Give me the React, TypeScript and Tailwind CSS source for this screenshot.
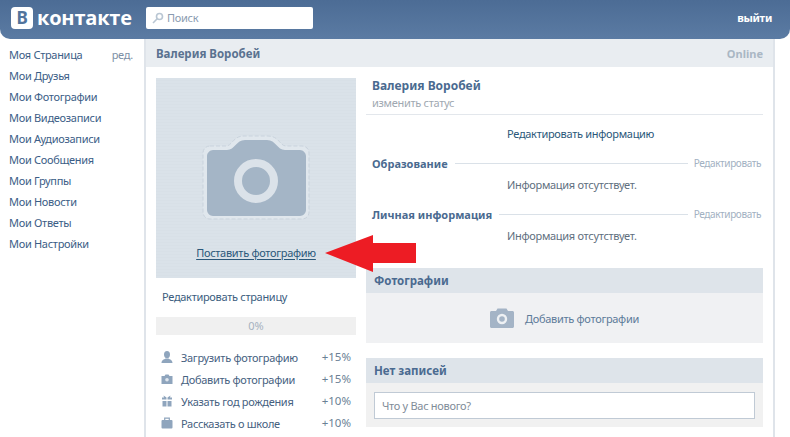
import React from 'react';

const font = { fontFamily: '"Noto Sans", Tahoma, sans-serif' };

const MENU = [
  'Моя Страница',
  'Мои Друзья',
  'Мои Фотографии',
  'Мои Видеозаписи',
  'Мои Аудиозаписи',
  'Мои Сообщения',
  'Мои Группы',
  'Мои Новости',
  'Мои Ответы',
  'Мои Настройки',
];

function UserIcon() {
  return (
    <svg width="12" height="12" viewBox="0 0 12 12" fill="#8fa5bd">
      <ellipse cx="6" cy="3.6" rx="3" ry="3.6" />
      <path d="M0.5 12 C0.5 9 3 8.6 4.5 7.5 L7.5 7.5 C9 8.6 11.5 9 11.5 12 Z" />
    </svg>
  );
}

function PhotoIcon() {
  return (
    <svg width="12" height="12" viewBox="0 0 12 12">
      <path fill="#8fa5bd" d="M0.5 3 H3.5 L4.5 1.5 H7.5 L8.5 3 H11.5 V11 H0.5 Z" />
      <circle cx="6" cy="6.8" r="1.8" fill="#dfe6ee" />
    </svg>
  );
}

function GiftIcon() {
  return (
    <svg width="12" height="12" viewBox="0 0 12 12" fill="#8fa5bd">
      <path d="M2.5 0.5 L5.5 2.5 V4.5 H1 V2.5 H3 Z M9.5 0.5 L6.5 2.5 V4.5 H11 V2.5 H9 Z" />
      <rect x="1.5" y="6" width="4" height="5.5" />
      <rect x="6.5" y="6" width="4" height="5.5" />
    </svg>
  );
}

function BagIcon() {
  return (
    <svg width="12" height="12" viewBox="0 0 12 12">
      <rect x="0.5" y="3" width="11" height="8.5" rx="1" fill="#8fa5bd" />
      <path d="M3.7 3 V1.2 H8.3 V3" fill="none" stroke="#8fa5bd" strokeWidth="1.2" />
    </svg>
  );
}

const TASKS = [
  { icon: <UserIcon />, label: 'Загрузить фотографию', pct: '+15%' },
  { icon: <PhotoIcon />, label: 'Добавить фотографии', pct: '+15%' },
  { icon: <GiftIcon />, label: 'Указать год рождения', pct: '+10%' },
  { icon: <BagIcon />, label: 'Рассказать о школе', pct: '+10%' },
];

function BigCamera() {
  return (
    <svg width="108" height="88" viewBox="0 0 108 88">
      <path
        d="M8 14 H24 C30 14 31 4 42 4 H66 C77 4 78 14 84 14 H100 C104 14 107 17 107 21 V80 C107 84 104 87 100 87 H8 C4 87 1 84 1 80 V21 C1 17 4 14 8 14 Z"
        fill="#e0e7ed"
        stroke="#c9d3dd"
        strokeWidth="1"
        strokeDasharray="4 2"
      />
      <path
        d="M11 18 H25 C33 18 34 8 43 8 H65 C74 8 75 18 83 18 H98 C101 18 104 21 104 24 V78 C104 81 101 84 98 84 H11 C8 84 5 81 5 78 V24 C5 21 8 18 11 18 Z"
        fill="#a4b5c6"
      />
      <circle cx="54" cy="49" r="18" fill="none" stroke="#dbe2e9" strokeWidth="8" />
    </svg>
  );
}

function SmallCamera() {
  return (
    <svg width="24" height="20" viewBox="0 0 24 20">
      <path
        d="M1.5 3 H6 L7.5 0.5 H16.5 L18 3 H22.5 C23.3 3 24 3.7 24 4.5 V18.5 C24 19.3 23.3 20 22.5 20 H1.5 C0.7 20 0 19.3 0 18.5 V4.5 C0 3.7 0.7 3 1.5 3 Z"
        fill="#a4b4c6"
      />
      <circle cx="12" cy="11" r="4" fill="none" stroke="#eef1f4" strokeWidth="2.4" />
    </svg>
  );
}

function SectionTitle({ title, lineWidth }: { title: string; lineWidth: string }) {
  return (
    <div className="flex items-center h-[16px] pl-[6px]">
      <span className="font-bold text-[11px] tracking-normal text-[#4a6a90] whitespace-nowrap">{title}</span>
      <div className={`ml-auto h-px bg-[#dae1e8] ${lineWidth}`} />
      <span className="ml-[6px] mr-[2px] text-[10px] tracking-[-0.4px] text-[#a2b1c2] whitespace-nowrap">Редактировать</span>
    </div>
  );
}

function BlockHead({ title }: { title: string }) {
  return (
    <div className="h-[25px] flex items-center pl-[8px] bg-[#dee4ea] font-bold text-[11.5px] tracking-normal text-[#4a6a90]">
      {title}
    </div>
  );
}

export default function App() {
  return (
    <div className="relative w-[790px] h-[437px] overflow-hidden bg-white flex flex-col text-[11px] leading-none tracking-[-0.3px]" style={font}>
      <header className="h-[39px] shrink-0 flex items-center pb-[4px] bg-gradient-to-b from-[#4c6c95] to-[#5b7ba3] rounded-bl-[10px] rounded-br-[10px]">
        <div className="ml-[11px] w-[22px] h-[22px] rounded-[4px] bg-white flex items-center justify-center font-bold text-[17px] text-[#52749c]">
          В
        </div>
        <span className="ml-[4px] w-[95px] font-bold text-[20px] tracking-[-0.2px] text-white" style={{ fontFamily: '"Open Sans", sans-serif' }}>
          контакте
        </span>
        <div className="ml-[14px] w-[167px] h-[22px] rounded-[2px] bg-white flex items-center pl-[6px] text-[#8a9bb0]">
          <svg width="12" height="12" viewBox="0 0 12 12" fill="none" stroke="#b9c6d3" strokeWidth="1.6">
            <circle cx="7.5" cy="4.5" r="3" />
            <path d="M5.2 6.8 L1 11" />
          </svg>
          <span className="ml-[3px]">Поиск</span>
        </div>
        <span className="ml-auto mr-[18px] font-bold text-white">выйти</span>
      </header>

      <div className="flex flex-1 min-h-0">
        <nav className="w-[144px] shrink-0 pt-[5px] pl-[9px] pr-[11px]">
          {MENU.map((item, i) => (
            <div key={item} className="h-[21px] flex items-center justify-between text-[#3b5d86] whitespace-nowrap">
              <span>{item}</span>
              {i === 0 && <span className="text-[#7c8fa6]">ред.</span>}
            </div>
          ))}
        </nav>

        <main className="w-[631px] shrink-0 border-x-2 border-[#dfe4ea] flex flex-col">
          <div className="h-[28px] shrink-0 flex items-center justify-between pl-[10px] pr-[10px] bg-[#e9edf1] font-bold tracking-normal">
            <span className="pt-[1px] text-[11.5px] text-[#5a7290]">Валерия Воробей</span>
            <span className="text-[11px] text-[#aab7c4]">Online</span>
          </div>

          <div className="flex gap-[10px] pt-[11px] px-[10px]">
            <div className="w-[200px] shrink-0">
              <div className="h-[200px] bg-[repeating-linear-gradient(0deg,#dae2e9_0,#dae2e9_2px,#d8e0e7_2px,#d8e0e7_3px)] flex flex-col items-center pt-[54px]">
                <BigCamera />
                <a className="mt-[27px] text-[#2b587a] underline underline-offset-2">Поставить фотографию</a>
              </div>
              <div className="h-[39px] flex items-center pb-[2px] pl-[6px] text-[#3b5d7e]">Редактировать страницу</div>
              <div className="h-[18px] bg-[#f0f0f0] flex items-center justify-center pb-[2px] tracking-normal text-[#a6b2c0]">0%</div>
              <div className="mt-[11px]">
                {TASKS.map((t) => (
                  <div key={t.label} className="h-[22px] flex items-center pl-[5px] pr-[5px] text-[#46617f]">
                    <span className="w-[20px] shrink-0 flex">{t.icon}</span>
                    <span className="whitespace-nowrap">{t.label}</span>
                    <span className="ml-auto text-[11.5px] tracking-normal text-[#6b7f95]">{t.pct}</span>
                  </div>
                ))}
              </div>
            </div>

            <div className="flex-1 min-w-0">
              <div className="h-[37px] border-b border-[#e3e7ec] pl-[6px]">
                <div className="pt-[1px] font-bold text-[12px] tracking-normal leading-[14px] text-[#4a6a90]">Валерия Воробей</div>
                <div className="mt-[4px] text-[#a0a8b1]">изменить статус</div>
              </div>
              <div className="h-[37px] mb-[3px] flex items-center pl-[141px] text-[#2b587a]">Редактировать информацию</div>
              <SectionTitle title="Образование" lineWidth="w-[233px]" />
              <div className="h-[28px] mb-[7px] flex items-center pl-[141px] pb-[1px] text-[#5f6f80]">Информация отсутствует.</div>
              <SectionTitle title="Личная информация" lineWidth="w-[189px]" />
              <div className="h-[28px] flex items-center pl-[141px] pb-[1px] text-[#5f6f80]">Информация отсутствует.</div>

              <div className="mt-[18px]">
                <BlockHead title="Фотографии" />
                <div className="h-[50px] bg-[#f0f1f3] flex items-center justify-center text-[#5c7a99]">
                  <SmallCamera />
                  <span className="ml-[11px]">Добавить фотографии</span>
                </div>
              </div>

              <div className="mt-[15px]">
                <BlockHead title="Нет записей" />
                <div className="h-[44px] bg-[#f1f1f1] flex items-center px-[8px]">
                  <div className="w-full h-[27px] bg-white border border-[#c0cad5] flex items-center pl-[7px] text-[#7f8c99]">
                    Что у Вас нового?
                  </div>
                </div>
              </div>
            </div>
          </div>
        </main>
      </div>

      <svg className="absolute left-[325px] top-[234px]" width="92" height="39" viewBox="0 0 92 39">
        <path d="M0 19 L48 1 V9 H91 V29 H48 V38 Z" fill="#ed1c24" />
      </svg>
    </div>
  );
}
